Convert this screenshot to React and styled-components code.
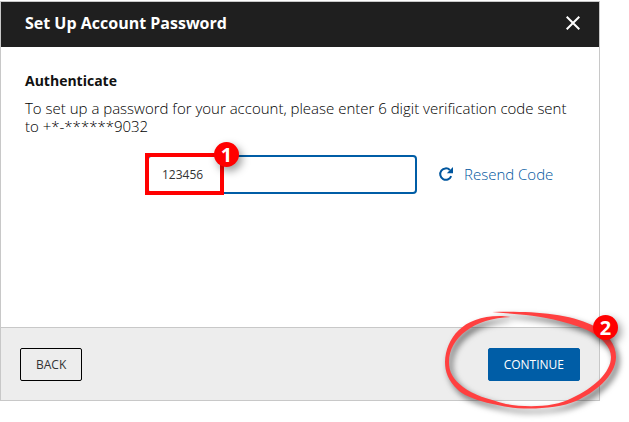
import styled, { createGlobalStyle } from 'styled-components';
import { useState } from 'react';

const GlobalStyle = createGlobalStyle`
  * {
    box-sizing: border-box;
  }

  body {
    margin: 0;
    background-color: #fff;
    font-family: 'Open Sans', 'Noto Sans', sans-serif;
    color: #333;
  }
`;

const StyledPage = styled.main`
  padding: 1px 29px 21px 0;
`;

const StyledDialog = styled.section`
  border: 1px solid #c8c8c8;
`;

const StyledHeader = styled.header`
  display: flex;
  justify-content: space-between;
  align-items: center;
  height: 45px;
  padding: 0 16px 3px 24px;
  background-color: #1f1f1f;
  color: #fff;

  h1 {
    margin: 0;
    font-size: 16px;
    font-weight: 700;
    line-height: 24px;
  }
`;

const StyledCloseButton = styled.button`
  display: flex;
  padding: 3px;
  border: none;
  background-color: transparent;
  color: #fff;
  cursor: pointer;
`;

const StyledBody = styled.div`
  min-height: 280px;
  padding: 24px 24px 0;

  h2 {
    margin: 0;
    color: #111;
    font-size: 14px;
    font-weight: 700;
    line-height: 20px;
  }

  p {
    margin: 8px 0 20px;
    color: #000;
    font-size: 15px;
    font-weight: 300;
    line-height: 18px;
  }
`;

const StyledCodeRow = styled.div`
  display: flex;
  align-items: center;
  gap: 21px;
  padding-left: 122px;
`;

const StyledCodeField = styled.label`
  position: relative;
  display: flex;
  width: 270px;

  input {
    width: 100%;
    height: 39px;
    padding: 0 13px;
    border: 2px solid #005da6;
    border-radius: 4px;
    outline: none;
    color: #333;
    font-family: inherit;
    font-size: 12px;
  }
`;

const StyledHighlight = styled.span`
  position: absolute;
  top: -2px;
  left: -2px;
  width: 79px;
  height: 42px;
  border: 4px solid #f00;
  pointer-events: none;
`;

const StyledBadge = styled.span`
  position: absolute;
  top: ${(props) => props.$top};
  right: ${(props) => props.$right};
  display: flex;
  justify-content: center;
  align-items: center;
  width: 25px;
  height: 25px;
  border-radius: 50%;
  background-color: #f00;
  box-shadow: 3px 4px 8px rgba(0, 0, 0, 0.4);
  color: #fff;
  font-size: 20px;
  font-weight: 700;
  line-height: 24px;
  pointer-events: none;
`;

const StyledResendButton = styled.button`
  display: flex;
  align-items: center;
  gap: 10px;
  padding: 0 0 1px;
  border: none;
  background-color: transparent;
  color: #00569e;
  font-family: inherit;
  font-size: 15px;
  font-weight: 300;
  line-height: 18px;
  white-space: nowrap;
  cursor: pointer;
`;

const StyledFooter = styled.footer`
  display: flex;
  justify-content: space-between;
  align-items: center;
  padding: 20px 19px 19px;
  border-top: 1px solid #c8c8c8;
  background-color: #ededed;
`;

const StyledButton = styled.button`
  height: 33px;
  padding: 0 15px;
  border: 1px solid ${(props) => (props.$primary ? '#005da6' : '#000')};
  border-radius: 2px;
  background-color: ${(props) => (props.$primary ? '#005da6' : 'transparent')};
  color: ${(props) => (props.$primary ? '#fff' : '#333')};
  font-family: inherit;
  font-size: 12px;
  line-height: 16px;
  cursor: pointer;
`;

const StyledContinue = styled.div`
  position: relative;
  display: flex;
`;

const StyledRing = styled.svg`
  position: absolute;
  top: -48px;
  left: -58px;
  overflow: visible;
  filter: drop-shadow(3px 4px 3px rgba(0, 0, 0, 0.6));
  pointer-events: none;
`;

export default function App() {
  const [code, setCode] = useState('123456');

  return (
    <StyledPage>
      <GlobalStyle />
      <StyledDialog role="dialog" aria-labelledby="dialog-title">
        <StyledHeader>
          <h1 id="dialog-title">Set Up Account Password</h1>
          <StyledCloseButton type="button" aria-label="Close">
            <svg width="14" height="14" viewBox="0 0 14 14" aria-hidden="true">
              <path d="M0.7 0.7L13.3 13.3M13.3 0.7L0.7 13.3" stroke="currentColor" strokeWidth="2" />
            </svg>
          </StyledCloseButton>
        </StyledHeader>
        <StyledBody>
          <h2>Authenticate</h2>
          <p>
            To set up a password for your account, please enter 6 digit
            verification code sent to +*-******9032
          </p>
          <StyledCodeRow>
            <StyledCodeField>
              <input
                type="text"
                inputMode="numeric"
                aria-label="Verification code"
                value={code}
                onChange={(event) => setCode(event.target.value)}
              />
              <StyledHighlight>
                <StyledBadge $top="-15px" $right="-19px">1</StyledBadge>
              </StyledHighlight>
            </StyledCodeField>
            <StyledResendButton type="button">
              <svg width="16" height="16" viewBox="0 0 16 16" aria-hidden="true">
                <path
                  d="M13.2 10.2A5.7 5.7 0 1 1 11.9 4"
                  fill="none"
                  stroke="currentColor"
                  strokeWidth="2"
                />
                <path d="M15 1V7.2H8.8Z" fill="currentColor" />
              </svg>
              Resend Code
            </StyledResendButton>
          </StyledCodeRow>
        </StyledBody>
        <StyledFooter>
          <StyledButton type="button">BACK</StyledButton>
          <StyledContinue>
            <StyledButton type="button" $primary>CONTINUE</StyledButton>
            <StyledRing width="190" height="112" viewBox="0 0 190 112" aria-hidden="true">
              <path
                d="M62 12C98 11 137 13 162 25C178 33 186 45 186 57C186 76 164 93 146 101C128 109 96 110 78 107C60 104 38 99 28 90C18 81 15 71 15 62C16 38 33 15 72 16L81 17C44 18 19 38 19 62C19 72 23 79 33 87C43 95 58 99 76 104C98 108 125 107 142 98C164 88 181 72 181 57C181 47 172 37 157 30C133 20 112 17 96 15Q75 13 62 12Z"
                fill="#ff4040"
              />
            </StyledRing>
            <StyledBadge $top="-33px" $right="-38px">2</StyledBadge>
          </StyledContinue>
        </StyledFooter>
      </StyledDialog>
    </StyledPage>
  );
}
